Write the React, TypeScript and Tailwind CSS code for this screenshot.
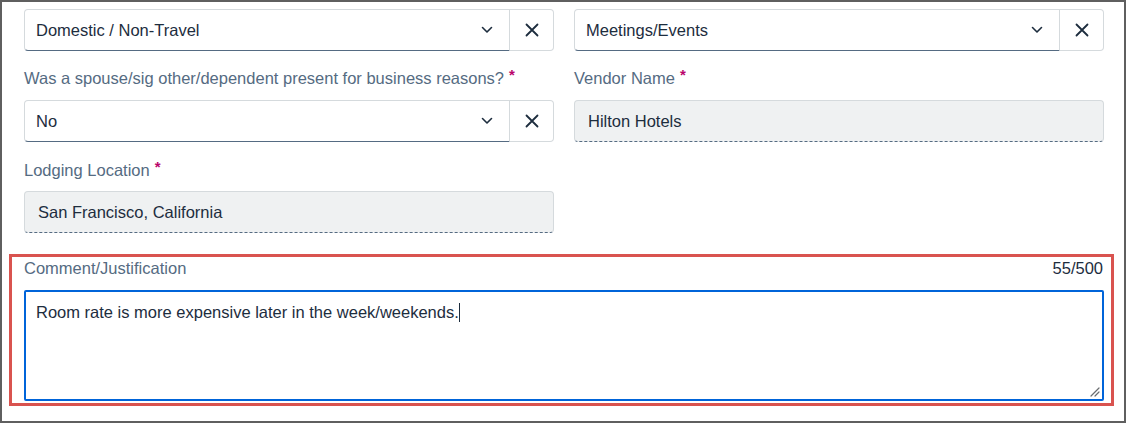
import React from "react";

const font = { fontFamily: '"Liberation Sans", Arial, sans-serif' };

function Chevron() {
    return (
        <svg width="12" height="8" viewBox="0 0 12 8" fill="none">
            <path d="M1.5 1.5L6 6L10.5 1.5" stroke="#1d2d3e" strokeWidth="1.6" strokeLinecap="round" strokeLinejoin="round" />
        </svg>
    );
}

function Cross() {
    return (
        <svg width="14" height="14" viewBox="0 0 14 14" fill="none">
            <path d="M1.5 1.5L12.5 12.5M12.5 1.5L1.5 12.5" stroke="#1d2d3e" strokeWidth="1.8" strokeLinecap="round" />
        </svg>
    );
}

function Label({ text, required = true }: { text: string; required?: boolean }) {
    return (
        <div className="h-[20px] flex items-center text-[16.5px] text-[#556b82] leading-none">
            <span>{text}</span>
            {required && <span className="ml-[5px] -mt-[8px] text-[#ba066c] font-bold text-[15px]">*</span>}
        </div>
    );
}

function Select({ value }: { value: string }) {
    return (
        <div className="flex h-[42px]">
            <div className="flex-1 flex items-center justify-between pl-[11px] pr-[16px] bg-white border border-[#d5dadd] border-b-[#556b82] rounded-l-[4px] text-[16.5px] text-[#1d2d3e]">
                <span>{value}</span>
                <Chevron />
            </div>
            <button className="w-[44px] flex items-center justify-center bg-white border border-l-0 border-[#d5dadd] rounded-r-[4px]">
                <Cross />
            </button>
        </div>
    );
}

function ReadOnlyInput({ value }: { value: string }) {
    return (
        <div className="h-[42px] flex items-center pl-[13px] bg-[#eff1f2] border border-[#d5dadd] border-b-[#556b82] rounded-[4px] text-[16.5px] text-[#1d2d3e]" style={{ borderBottomStyle: "dashed" }}>
            {value}
        </div>
    );
}

export default function App() {
    return (
        <div className="w-[1126px] h-[423px] bg-white border-2 border-[#5f5f5f] overflow-hidden" style={font}>
            <div className="pl-[22px] pr-[20px] pt-[7px]">
                {/* Expense type row */}
                <div className="grid grid-cols-2 gap-x-[20px]">
                    <Select value="Domestic / Non-Travel" />
                    <Select value="Meetings/Events" />
                </div>

                {/* Spouse / vendor row */}
                <div className="grid grid-cols-2 gap-x-[20px] mt-[17px]">
                    <Label text="Was a spouse/sig other/dependent present for business reasons?" />
                    <Label text="Vendor Name" />
                    <div className="mt-[12px]">
                        <Select value="No" />
                    </div>
                    <div className="mt-[12px]">
                        <ReadOnlyInput value="Hilton Hotels" />
                    </div>
                </div>

                {/* Lodging row */}
                <div className="grid grid-cols-2 gap-x-[20px] mt-[18px]">
                    <Label text="Lodging Location" />
                    <div />
                    <div className="mt-[11px]">
                        <ReadOnlyInput value="San Francisco, California" />
                    </div>
                </div>
            </div>

            {/* Comment field, outlined */}
            <div className="ml-[7px] mt-[21px] w-[1105px] h-[152px] border-[3px] border-[#d9534f] pl-[12px] pr-[7px] pt-[1px]">
                <div className="h-[20px] flex items-center justify-between text-[16.5px] leading-none">
                    <span className="text-[#556b82]">Comment/Justification</span>
                    <span className="text-[#1d2d3e] pr-[1px]">55/500</span>
                </div>
                <div className="relative mt-[12px] h-[111px] border-2 border-[#0064d9] rounded-[2px] pl-[10px] pt-[8px] text-[16.5px] text-[#1d2d3e]">
                    <span>Room rate is more expensive later in the week/weekends.</span>
                    <span className="inline-block w-px h-[19px] bg-[#1d2d3e] align-middle -mt-[2px]" />
                    <svg className="absolute right-[2px] bottom-[2px]" width="11" height="11" viewBox="0 0 11 11" fill="none">
                        <path d="M10 2L2 10M10 6L6 10" stroke="#6a6d70" strokeWidth="1.2" strokeLinecap="round" />
                    </svg>
                </div>
            </div>
        </div>
    );
}
